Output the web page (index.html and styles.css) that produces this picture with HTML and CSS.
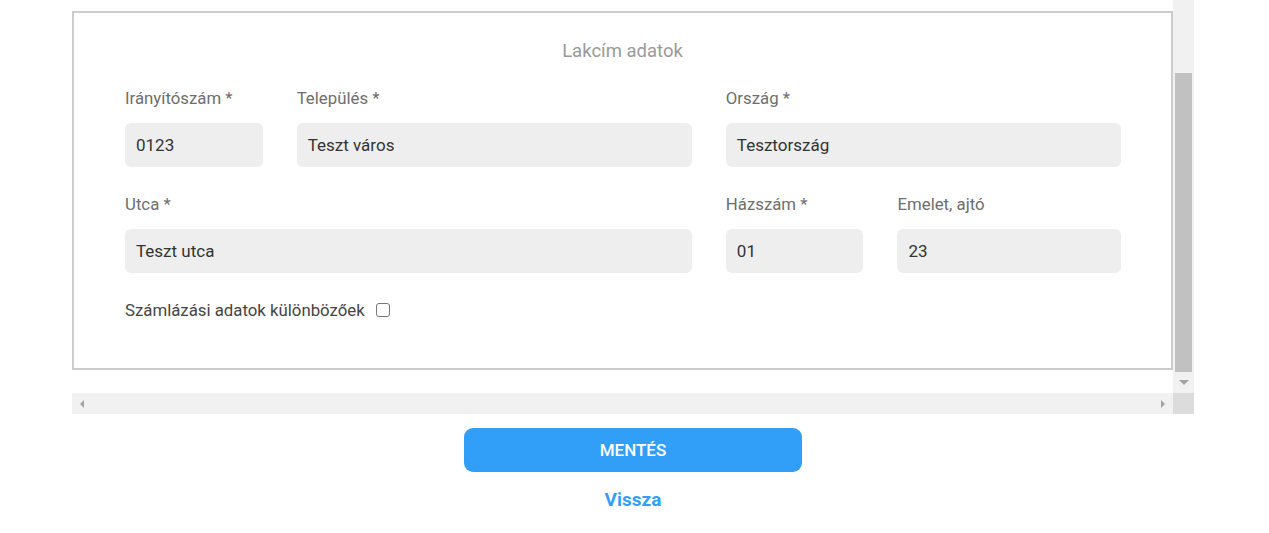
FILE: index.html
```html
<!DOCTYPE html>
<html lang="hu">
<head>
<meta charset="utf-8">
<title>Lakcím adatok</title>
<link rel="stylesheet" href="styles.css">
</head>
<body>
<div class="page">
  <div class="scroller">
    <div class="viewport">
      <div class="fieldset">
        <div class="legend">Lakcím adatok</div>
        <div class="grid">
          <div class="field span2">
            <label class="lbl">Irányítószám *</label>
            <div class="input">0123</div>
          </div>
          <div class="field span5">
            <label class="lbl">Település *</label>
            <div class="input">Teszt város</div>
          </div>
          <div class="field span5">
            <label class="lbl">Ország *</label>
            <div class="input">Tesztország</div>
          </div>
          <div class="field span7">
            <label class="lbl">Utca *</label>
            <div class="input">Teszt utca</div>
          </div>
          <div class="field span2">
            <label class="lbl">Házszám *</label>
            <div class="input">01</div>
          </div>
          <div class="field span3">
            <label class="lbl">Emelet, ajtó</label>
            <div class="input">23</div>
          </div>
        </div>
        <div class="check-row">
          <span class="check-text">Számlázási adatok különbözőek</span>
          <span class="checkbox"></span>
        </div>
      </div>
    </div>
    <div class="vbar">
      <div class="vtrack"></div>
      <div class="vthumb"></div>
      <div class="vbtn"><span class="tri-down"></span></div>
    </div>
    <div class="hbar">
      <span class="tri-left"></span>
      <span class="tri-right"></span>
    </div>
    <div class="corner"></div>
  </div>
  <div class="actions">
    <button class="save">MENTÉS</button>
    <a class="back" href="#">Vissza</a>
  </div>
</div>
</body>
</html>
```
FILE: styles.css
```css
* { box-sizing: border-box; }
html, body { margin: 0; padding: 0; background: #fff; }
body {
  font-family: Roboto, "Noto Sans", "Liberation Sans", sans-serif;
  color: #333;
}
.page {
  width: 1122px;
  margin-left: 72px;
}
.scroller {
  width: 1122px;
  height: 414px;
  display: grid;
  grid-template-columns: 1101px 21px;
  grid-template-rows: 393px 21px;
}
.viewport {
  overflow: hidden;
  background: #fff;
}
.fieldset {
  margin-top: 11px;
  width: 1101px;
  height: 359px;
  border: 2px solid #cccccc;
  padding: 0 49px 0 51px;
}
.legend {
  margin-top: 26px;
  text-align: center;
  font-size: 18.5px;
  line-height: 24px;
  color: #9a9a9a;
  margin-left: -51px;
  margin-right: -49px;
}
.grid {
  margin-top: 23px;
  width: 996px;
  display: grid;
  grid-template-columns: repeat(12, 1fr);
  column-gap: 34px;
  row-gap: 25px;
}
.span2 { grid-column: span 2; }
.span3 { grid-column: span 3; }
.span5 { grid-column: span 5; }
.span7 { grid-column: span 7; }
.field { display: flex; flex-direction: column; gap: 13px; }
.lbl {
  font-size: 16.8px;
  line-height: 24px;
  color: #6e6e6e;
}
.input {
  height: 44px;
  background: #eeeeee;
  border-radius: 6px;
  padding: 0 12px 0 11px;
  display: flex;
  align-items: center;
  font-size: 17px;
  color: #333;
}
.check-row {
  margin-top: 25px;
  display: flex;
  align-items: center;
  height: 24px;
}
.check-text {
  font-size: 16.8px;
  line-height: 24px;
  color: #444;
}
.checkbox {
  width: 14px;
  height: 14px;
  border: 1px solid #767676;
  border-radius: 3px;
  margin-left: 11px;
  background: #fff;
}
.vbar {
  background: #f1f1f1;
  display: flex;
  flex-direction: column;
  align-items: center;
}
.vtrack { height: 73px; }
.vthumb {
  width: 17px;
  height: 299px;
  background: #c1c1c1;
}
.vbtn {
  height: 21px;
  width: 21px;
  display: flex;
  justify-content: center;
  align-items: center;
}
.tri-down {
  width: 0; height: 0;
  border-left: 5px solid transparent;
  border-right: 5px solid transparent;
  border-top: 5px solid #a3a3a3;
}
.hbar {
  background: #f1f1f1;
  display: flex;
  justify-content: space-between;
  align-items: center;
  padding: 0 8px;
}
.tri-left {
  width: 0; height: 0;
  border-top: 4px solid transparent;
  border-bottom: 4px solid transparent;
  border-right: 4px solid #a3a3a3;
}
.tri-right {
  width: 0; height: 0;
  border-top: 4px solid transparent;
  border-bottom: 4px solid transparent;
  border-left: 4px solid #a3a3a3;
}
.corner { background: #dcdcdc; }
.actions {
  display: flex;
  flex-direction: column;
  align-items: center;
}
.save {
  margin-top: 14px;
  width: 338px;
  height: 44px;
  border: none;
  border-radius: 9px;
  background: #319ff7;
  color: #fff;
  font-family: inherit;
  font-size: 17px;
  font-weight: 500;
  cursor: pointer;
}
.back {
  margin-top: 16px;
  font-size: 19px;
  line-height: 24px;
  font-weight: bold;
  color: #319ff7;
  text-decoration: none;
}
```
